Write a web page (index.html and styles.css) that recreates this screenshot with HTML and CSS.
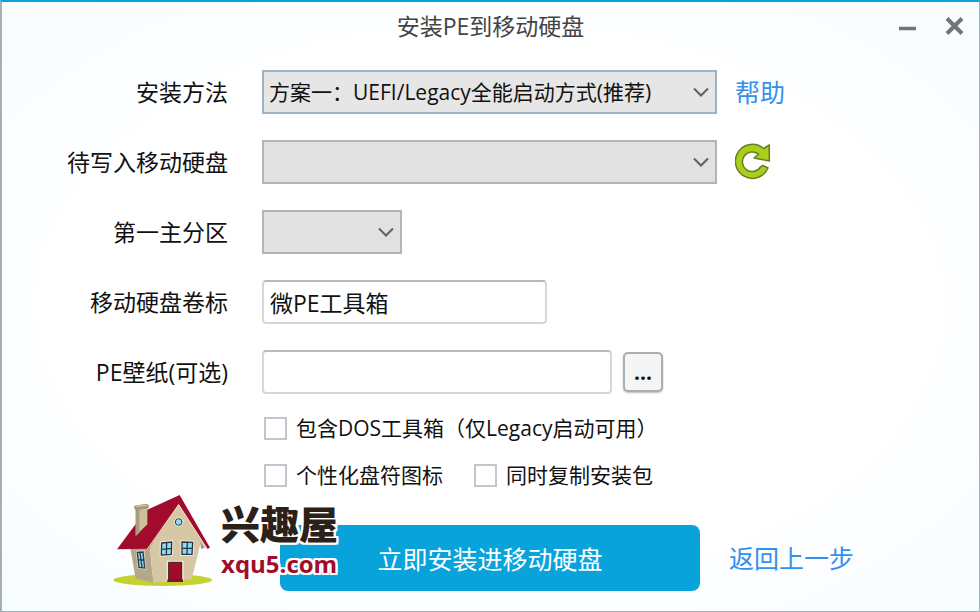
FILE: index.html
```html
<!DOCTYPE html>
<html lang="zh-CN">
<head>
    <meta charset="UTF-8">
    <meta name="viewport" content="width=device-width, initial-scale=1">
    <title>安装PE到移动硬盘</title>
    <link rel="stylesheet" href="styles.css">
</head>
<body>
    <div class="window">
        <header class="titlebar">
            <h1>安装PE到移动硬盘</h1>
            <div class="window-buttons">
                <button type="button" aria-label="最小化">
                    <svg width="20" height="20" viewBox="0 0 20 20"><path d="M2 12.5H19" stroke="#747474" stroke-width="3.5"/></svg>
                </button>
                <button type="button" aria-label="关闭">
                    <svg width="20" height="20" viewBox="0 0 20 20"><path d="M3 2.5L18 17.5M18 2.5L3 17.5" stroke="#747474" stroke-width="4"/></svg>
                </button>
            </div>
        </header>

        <form>
            <div class="row">
                <label for="method">安装方法</label>
                <div class="select-box active">
                    <select id="method">
                        <option>方案一：UEFI/Legacy全能启动方式(推荐)</option>
                    </select>
                    <svg class="arrow" width="16" height="10" viewBox="0 0 16 10"><path d="M1 1.5L8 8.5L15 1.5" fill="none" stroke="#606060" stroke-width="2"/></svg>
                </div>
                <a class="help" href="#help">帮助</a>
            </div>

            <div class="row">
                <label for="disk">待写入移动硬盘</label>
                <div class="select-box">
                    <select id="disk"></select>
                    <svg class="arrow" width="16" height="10" viewBox="0 0 16 10"><path d="M1 1.5L8 8.5L15 1.5" fill="none" stroke="#606060" stroke-width="2"/></svg>
                </div>
                <button class="refresh" type="button" aria-label="刷新">
                    <svg width="36" height="38" viewBox="0 0 36 38">
                        <path d="M34.3 2V18L19 15L23.5 11.2A9.8 9.8 0 1 0 25.5 24L28 22.5L33 25A17 17 0 1 1 28.5 5.5Z" fill="#a9cf1c" stroke="#66801f" stroke-width="1.5" stroke-linejoin="round"/>
                    </svg>
                </button>
            </div>

            <div class="row">
                <label for="partition">第一主分区</label>
                <div class="select-box small">
                    <select id="partition"></select>
                    <svg class="arrow" width="16" height="10" viewBox="0 0 16 10"><path d="M1 1.5L8 8.5L15 1.5" fill="none" stroke="#606060" stroke-width="2"/></svg>
                </div>
            </div>

            <div class="row">
                <label for="volume">移动硬盘卷标</label>
                <input class="text-input volume" id="volume" type="text" value="微PE工具箱">
            </div>

            <div class="row">
                <label for="wallpaper">PE壁纸(可选)</label>
                <div class="file-box">
                    <input class="text-input" id="wallpaper" type="text">
                    <button class="browse" type="button">...</button>
                </div>
            </div>

            <div class="checks">
                <div class="check-line">
                    <label class="check"><input type="checkbox">包含DOS工具箱（仅Legacy启动可用）</label>
                </div>
                <div class="check-line">
                    <label class="check"><input type="checkbox">个性化盘符图标</label>
                    <label class="check"><input type="checkbox">同时复制安装包</label>
                </div>
            </div>

            <footer class="actions">
                <button class="install" type="submit">立即安装进移动硬盘</button>
                <a class="back" href="#back">返回上一步</a>

                <div class="logo">
                    <svg class="house" width="100" height="94" viewBox="40 15 300 282">
                        <ellipse cx="189" cy="273" rx="148" ry="18" fill="#c3d22e"/>
                        <!-- walls -->
                        <path d="M92 178L150 170L161 281L108 269Z" fill="#b5a88a"/>
                        <path d="M237 47L150 170L161 281L276 271L302 165L316 172Z" fill="#d6c8a5"/>
                        <path d="M302 158L316 176L304 179Z" fill="#a2957b"/>
                        <!-- roof -->
                        <path d="M240 18L331 176L322 180L237 46L146 179L52 181L106 108L143 62Z" fill="#a20c2c"/>
                        <path d="M143 180L237 47L323 180" fill="none" stroke="#eee4ca" stroke-width="3"/>
                        <!-- chimney -->
                        <path d="M108 60L143 56V106L108 141Z" fill="#cdbf9c"/>
                        <path d="M108 60L119 62V131L108 141Z" fill="#a99b7c"/>
                        <path d="M104 50L140 44L147 48V58L110 64L104 60Z" fill="#a4977b"/>
                        <path d="M108 51L139 47L143 50L112 54Z" fill="#d8ccae"/>
                        <!-- windows -->
                        <circle cx="237" cy="99" r="14" fill="#f0e8d2"/>
                        <circle cx="237" cy="99" r="10" fill="#8fdcf2" stroke="#27384a" stroke-width="3"/>
                        <path d="M184 161L217 157L216 197L184 199Z" fill="#8fdcf2" stroke="#f0e8d2" stroke-width="8"/>
                        <path d="M186 162L216 159L215 196L185 198ZM201 160L200 197M186 181L216 178" fill="#8fdcf2" stroke="#27384a" stroke-width="4"/>
                        <path d="M246 158L280 159L278 197L246 197Z" fill="#8fdcf2" stroke="#f0e8d2" stroke-width="8"/>
                        <path d="M247 159L279 160L277 196L247 196ZM263 159L262 196M247 178L278 178" fill="#8fdcf2" stroke="#27384a" stroke-width="4"/>
                        <path d="M112 189L131 187L136 238L117 236Z" fill="#8fdcf2" stroke="#e0d5b8" stroke-width="7"/>
                        <path d="M113 190L130 189L135 237L118 235ZM121 190L127 236M115 212L133 213" fill="#8fdcf2" stroke="#27384a" stroke-width="4"/>
                        <!-- door -->
                        <path d="M204 279V218H249V276" fill="#a20c2c" stroke="#f0e8d2" stroke-width="6"/>
                        <path d="M207 274V220H246V272" fill="#a20c2c" stroke="#39262a" stroke-width="3"/>
                        <path d="M204 271H250V279H202Z" fill="#85102a"/>
                    </svg>
                    <div class="logo-text">
                        <span class="logo-name">兴趣屋</span>
                        <span class="logo-site">xqu5.com</span>
                    </div>
                </div>
            </footer>
        </form>
    </div>
</body>
</html>
```

FILE: styles.css
```css
* {
    box-sizing: border-box;
}
body {
    margin: 0;
    font-family: "Open Sans", "Noto Sans CJK SC", sans-serif;
    font-size: 23px;
    line-height: 32px;
    color: #111;
}
.window {
    min-height: 100vh;
    border: 1px solid #a5b0b6;
    border-top: 2px solid #09a3dc;
    border-left-width: 2px;
    background: radial-gradient(ellipse at center, #fff 60%, #f7fcff 100%);
}
button,
input,
select {
    font-family: inherit;
    color: inherit;
}
button {
    padding: 0;
    border: none;
    background: none;
    cursor: pointer;
}
svg {
    display: block;
}
a {
    font-size: 25px;
    color: #3490ee;
    text-decoration: none;
}

/* title bar */
.titlebar {
    display: grid;
    grid-template-columns: 1fr auto 1fr;
    align-items: center;
    height: 48px;
    padding: 0 15px;
}
.titlebar h1 {
    grid-column: 2;
    margin: 0;
    font-size: 23px;
    font-weight: normal;
    color: #444;
}
.window-buttons {
    display: flex;
    justify-content: flex-end;
    gap: 27px;
}

/* form */
form {
    padding-top: 20px;
}
.row {
    display: grid;
    grid-template-columns: 226px minmax(0, 1fr) 262px;
    align-items: center;
    height: 44px;
    margin-bottom: 26px;
}
.row > label {
    text-align: right;
}
.row > :nth-child(2) {
    margin-left: 34px;
}
.row > :nth-child(3) {
    justify-self: start;
}
.select-box {
    position: relative;
    height: 44px;
}
.select-box select {
    width: 100%;
    height: 100%;
    padding: 0 32px 0 5px;
    border: 2px solid #b4b4b4;
    border-radius: 0;
    background: #e1e1e1;
    font-size: 21px;
    appearance: none;
}
.select-box.active select {
    border-color: #a0b2c6;
    background: #e6e6e6;
}
.select-box.small {
    width: 140px;
}
.arrow {
    position: absolute;
    right: 8px;
    top: 17px;
    pointer-events: none;
}
.help,
.refresh {
    margin-left: 18px;
}
.text-input {
    width: 350px;
    height: 44px;
    padding: 0 6px;
    border: 2px solid #d4d8d8;
    border-top-color: #b4bcbc;
    border-radius: 4px;
    background: #fff;
    font-size: 23px;
}
.text-input.volume {
    width: 285px;
}
.file-box {
    display: flex;
    align-items: center;
    gap: 11px;
}
.browse {
    width: 40px;
    height: 40px;
    border: 2px solid #a9b0b3;
    border-radius: 5px;
    background: #f5f5f5;
    box-shadow: 0 1px 2px #bbb;
    font-size: 21px;
    font-weight: bold;
}

/* check boxes */
.checks {
    display: flex;
    flex-direction: column;
    gap: 15px;
    margin: -8px 0 0 262px;
    font-size: 21px;
}
.check-line {
    display: flex;
    gap: 31px;
}
.check {
    display: flex;
    align-items: center;
    gap: 9px;
}
.check input {
    width: 23px;
    height: 23px;
    margin: 0;
    border: 2px solid #c3c6ce;
    background: #fff;
    appearance: none;
}
.check input:checked {
    background: #09a3dc;
}

/* bottom buttons */
.actions {
    position: relative;
    display: grid;
    grid-template-columns: minmax(0, 1fr) 250px;
    align-items: center;
    gap: 29px;
    margin-top: 34px;
    padding: 0 0 18px 278px;
}
.install {
    height: 66px;
    border-radius: 8px;
    background: #09a3dc;
    color: #fff;
    font-size: 25px;
}
.logo {
    position: absolute;
    left: 111px;
    top: -31px;
    display: flex;
    gap: 8px;
    pointer-events: none;
}
.logo-text {
    display: flex;
    flex-direction: column;
    padding-top: 8px;
    font-weight: bold;
    text-shadow: 2px 0 #fff, -2px 0 #fff, 0 2px #fff, 0 -2px #fff,
        2px 2px #fff, -2px 2px #fff, 2px -2px #fff, -2px -2px #fff;
}
.logo-name {
    font-family: "Noto Sans CJK SC", sans-serif;
    font-size: 39px;
    font-weight: 900;
    line-height: 40px;
    color: #2b2118;
}
.logo-site {
    font-size: 24px;
    line-height: 44px;
    color: #a20c2c;
}
```
